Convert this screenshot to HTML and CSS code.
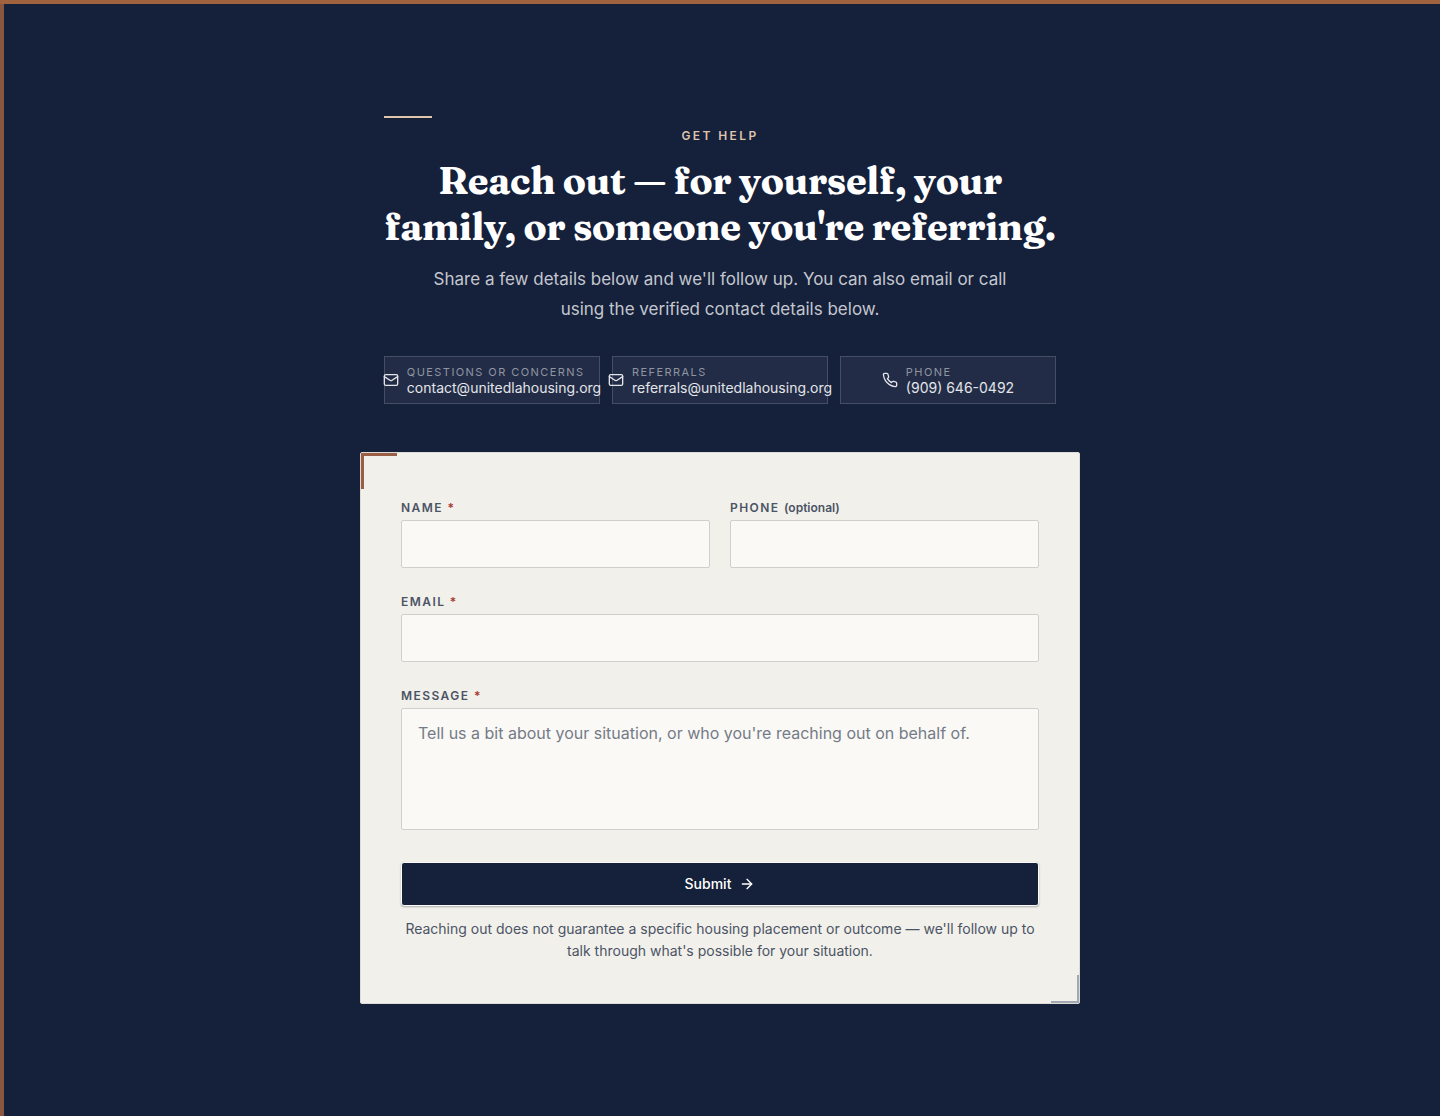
FILE: index.html
```html
<!DOCTYPE html>
<html lang="en">
<head>
	<meta charset="UTF-8">
	<meta name="viewport" content="width=device-width, initial-scale=1">
	<title>Get Help</title>
	<link rel="stylesheet" href="styles.css">
</head>
<body>
	<section class="help">
		<header class="intro">
			<p class="eyebrow">Get Help</p>
			<h2 class="title">Reach out — for yourself, your family, or someone you're referring.</h2>
			<p class="lead">Share a few details below and we'll follow up. You can also email or call using the verified contact details below.</p>
			<div class="contacts">
				<a class="contact" href="mailto:contact@unitedlahousing.org">
					<svg class="icon" viewBox="0 0 24 24"><rect x="2" y="4" width="20" height="16" rx="2"/><path d="m22 7-8.97 5.7a1.94 1.94 0 0 1-2.06 0L2 7"/></svg>
					<span class="contact-text">
						<span class="contact-label">Questions or concerns</span>
						<span>contact@unitedlahousing.org</span>
					</span>
				</a>
				<a class="contact" href="mailto:referrals@unitedlahousing.org">
					<svg class="icon" viewBox="0 0 24 24"><rect x="2" y="4" width="20" height="16" rx="2"/><path d="m22 7-8.97 5.7a1.94 1.94 0 0 1-2.06 0L2 7"/></svg>
					<span class="contact-text">
						<span class="contact-label">Referrals</span>
						<span>referrals@unitedlahousing.org</span>
					</span>
				</a>
				<a class="contact" href="tel:+19096460492">
					<svg class="icon" viewBox="0 0 24 24"><path d="M22 16.92v3a2 2 0 0 1-2.18 2 19.79 19.79 0 0 1-8.63-3.07 19.5 19.5 0 0 1-6-6 19.79 19.79 0 0 1-3.07-8.67A2 2 0 0 1 4.11 2h3a2 2 0 0 1 2 1.72 12.84 12.84 0 0 0 .7 2.81 2 2 0 0 1-.45 2.11L8.09 9.91a16 16 0 0 0 6 6l1.27-1.27a2 2 0 0 1 2.11-.45 12.84 12.84 0 0 0 2.81.7A2 2 0 0 1 22 16.92z"/></svg>
					<span class="contact-text">
						<span class="contact-label">Phone</span>
						<span>(909) 646-0492</span>
					</span>
				</a>
			</div>
		</header>

		<form class="card">
			<div class="row">
				<div class="field">
					<label class="label" for="name">Name <span class="required">*</span></label>
					<input class="input" id="name" name="name" type="text" required>
				</div>
				<div class="field">
					<label class="label" for="phone">Phone <span class="optional">(optional)</span></label>
					<input class="input" id="phone" name="phone" type="tel">
				</div>
			</div>
			<div class="field">
				<label class="label" for="email">Email <span class="required">*</span></label>
				<input class="input" id="email" name="email" type="email" required>
			</div>
			<div class="field">
				<label class="label" for="message">Message <span class="required">*</span></label>
				<textarea class="input message" id="message" name="message" placeholder="Tell us a bit about your situation, or who you're reaching out on behalf of." required></textarea>
			</div>
			<div class="actions">
				<button class="submit" type="submit">
					Submit
					<svg class="icon" viewBox="0 0 24 24"><path d="M5 12h14"/><path d="m12 5 7 7-7 7"/></svg>
				</button>
				<p class="note">Reaching out does not guarantee a specific housing placement or outcome — we'll follow up to talk through what's possible for your situation.</p>
			</div>
		</form>
	</section>
</body>
</html>
```
FILE: styles.css
```css
:root {
	--navy: #15203b;
	--copper: #a0623f;
	--sand: #dfc5ac;
	--paper: #f2f0ea;
	--slate: #4b5466;
}

*,
*::before,
*::after {
	box-sizing: border-box;
}

body {
	margin: 0;
	background: var(--navy);
	font-family: Inter, "Liberation Sans", sans-serif;
}

p,
h2 {
	margin: 0;
}

.help {
	position: relative;
	min-height: 100vh;
	padding: 112px 24px;
	border-top: 4px solid var(--copper);
}

/* copper edge down the left side */
.help::before {
	content: "";
	position: absolute;
	top: 0;
	bottom: 0;
	left: 0;
	width: 4px;
	background: #8a5640;
}

.intro {
	max-width: 672px;
	margin: 0 auto 48px;
	text-align: center;
}

.eyebrow {
	margin-bottom: 12px;
	color: var(--sand);
	font-size: 12px;
	font-weight: 600;
	line-height: 20px;
	letter-spacing: 0.2em;
	text-transform: uppercase;
}

.eyebrow::before {
	content: "";
	display: block;
	width: 48px;
	height: 2px;
	margin-bottom: 8px;
	background: var(--sand);
}

.title {
	margin-bottom: 14px;
	color: #fff;
	font-family: Fraunces, "Liberation Serif", serif;
	font-size: 38px;
	font-weight: 700;
	line-height: 46px;
	letter-spacing: -0.01em;
}

.lead {
	max-width: 576px;
	margin: 0 auto 32px;
	color: #c4c7ce;
	font-size: 17px;
	line-height: 30px;
}

.contacts {
	display: grid;
	grid-template-columns: repeat(3, minmax(0, 1fr));
	gap: 12px;
}

.contact {
	display: flex;
	align-items: center;
	justify-content: center;
	gap: 8px;
	height: 48px;
	border: 1px solid #454e63;
	background: #222c46;
	color: #e3e5e9;
	font-size: 14px;
	line-height: 16px;
	text-decoration: none;
	white-space: nowrap;
}

.contact-text {
	display: flex;
	flex-direction: column;
	text-align: left;
}

.contact-label {
	color: #8f95a2;
	font-size: 11px;
	letter-spacing: 0.13em;
	text-transform: uppercase;
}

.icon {
	flex: none;
	width: 16px;
	height: 16px;
	fill: none;
	stroke: currentColor;
	stroke-width: 2;
	stroke-linecap: round;
	stroke-linejoin: round;
}

.card {
	position: relative;
	display: flex;
	flex-direction: column;
	gap: 24px;
	max-width: 720px;
	margin: 0 auto;
	padding: 45px 40px 41px;
	border: 1px solid #dddbd5;
	border-radius: 2px;
	background: var(--paper);
}

/* corner brackets */
.card::before,
.card::after {
	content: "";
	position: absolute;
}

.card::before {
	top: 0;
	left: 0;
	width: 36px;
	height: 36px;
	border-top: 3px solid #9a5f45;
	border-left: 3px solid #9a5f45;
}

.card::after {
	right: 0;
	bottom: 0;
	width: 28px;
	height: 28px;
	border-right: 2px solid #a3a9b2;
	border-bottom: 2px solid #a3a9b2;
}

.row {
	display: grid;
	grid-template-columns: 1fr 1fr;
	gap: 20px;
}

.field {
	display: flex;
	flex-direction: column;
	gap: 2px;
}

.label {
	color: var(--slate);
	font-size: 12px;
	font-weight: 600;
	line-height: 20px;
	letter-spacing: 0.12em;
	text-transform: uppercase;
}

.required {
	color: #a8392f;
}

.optional {
	letter-spacing: 0;
	text-transform: none;
}

.input {
	width: 100%;
	height: 48px;
	padding: 12px 16px;
	border: 1px solid #d0cfcb;
	border-radius: 2px;
	background: #faf9f5;
	color: var(--navy);
	font: 16px/24px Inter, "Liberation Sans", sans-serif;
}

.input::placeholder {
	color: #757b88;
}

.message {
	height: 122px;
	resize: none;
}

.actions {
	display: flex;
	flex-direction: column;
	gap: 12px;
	padding-top: 8px;
}

.submit {
	display: flex;
	align-items: center;
	justify-content: center;
	gap: 8px;
	height: 44px;
	border: 1px solid #fbfaf8;
	border-radius: 3px;
	background: var(--navy);
	box-shadow: 0 1px 2px #15203b55;
	color: #fff;
	font: 500 14px/20px Inter, "Liberation Sans", sans-serif;
	cursor: pointer;
}

.note {
	color: var(--slate);
	font-size: 14px;
	line-height: 22px;
	text-align: center;
}

@media (max-width: 640px) {
	.contacts,
	.row {
		grid-template-columns: 1fr;
	}
}
```
